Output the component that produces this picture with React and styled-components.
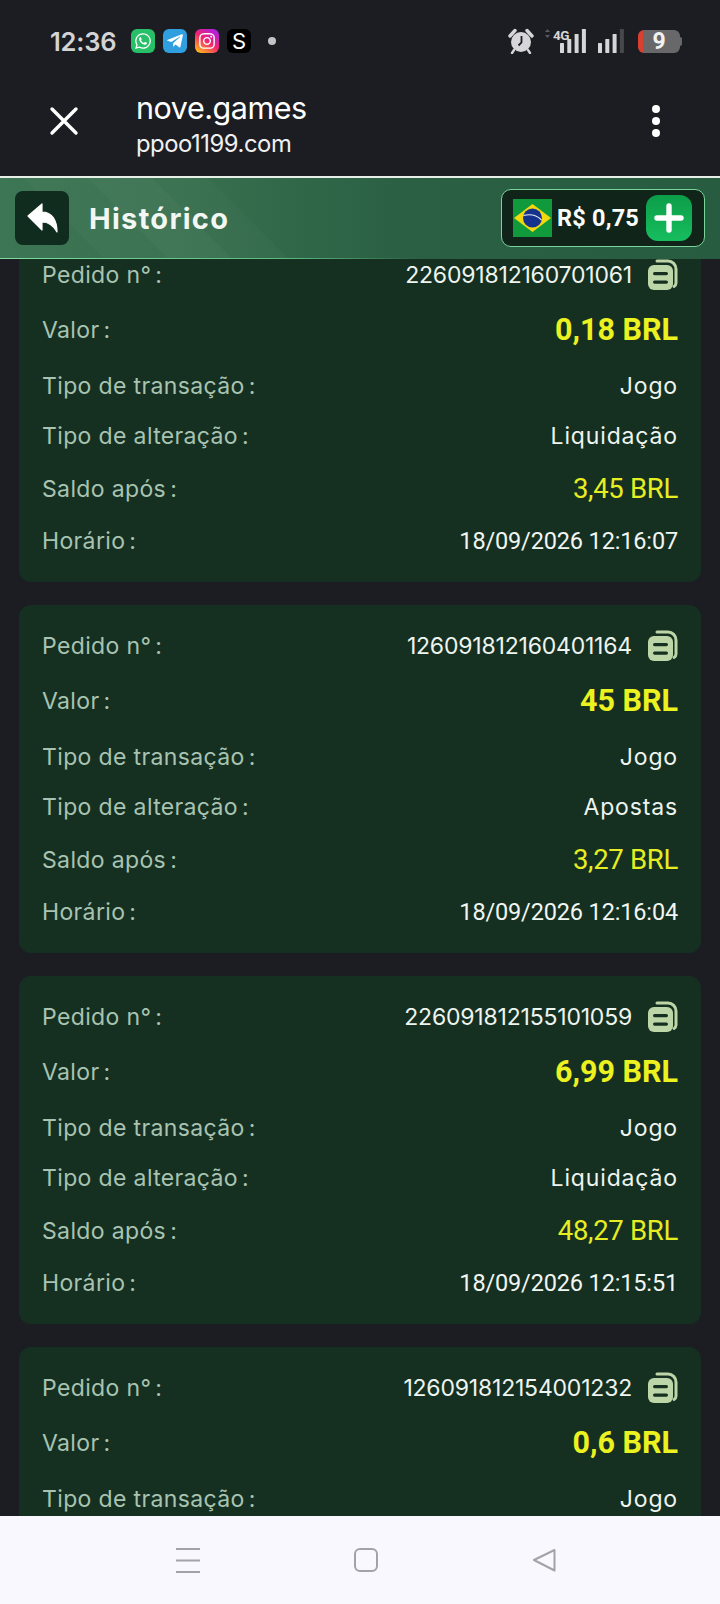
import React from "react";
import styled, { createGlobalStyle } from "styled-components";
import { FaWhatsapp, FaTelegramPlane, FaInstagram } from "react-icons/fa";

const Global = createGlobalStyle`
  html, body { margin: 0; padding: 0; background: #1c1d22; }
  * { box-sizing: border-box; }
`;

const Screen = styled.div`
  width: 720px; height: 1604px; display: flex; flex-direction: column;
  overflow: hidden; background: #1c1d22; font-family: "Inter", sans-serif;
`;
const StatusBar = styled.div`
  height: 82px; flex: none; display: flex; align-items: center; padding: 0 38px 0 50px; color: #d4d4d6;
`;
const Time = styled.span`
  font-size: 25.5px; font-weight: 600; width: 81px; letter-spacing: -0.2px;
`;
const AppIcon = styled.span`
  width: 24px; height: 24px; border-radius: 6px; margin-right: 8px; display: flex; align-items: center; justify-content: center;
  color: #fff; font-size: ${(p) => p.$fs || 18}px; background: ${(p) => p.$bg};
  font-family: "Inter", sans-serif;
`;
const Dot = styled.span`
  width: 8px; height: 8px; border-radius: 50%; background: #c4c4c6; margin-left: 9px;
`;
const StatusRight = styled.div`
  margin-left: auto; display: flex; align-items: center;
`;
const Spacer = styled.span`
  width: ${(p) => p.$w}px; flex: none;
`;
const Battery = styled.div`
  width: 42px; height: 23px; border-radius: 6px; background: #68686a; margin-left: 14px;
  display: flex; align-items: center; justify-content: center; color: #f2f2f2;
  font: 700 23px/23px "Roboto", sans-serif; border-left: 5px solid #d8402f;
  padding-right: 5px;
`;
const BatteryCap = styled.span`
  width: 2px; height: 9px; background: #68686a; border-radius: 0 2px 2px 0;
`;
const AppBar = styled.div`
  height: 94px; flex: none; display: flex; align-items: center; padding: 0 0 16px 48px; color: #fff;
`;
const Titles = styled.div`
  margin: 7px 0 0 56px; display: flex; flex-direction: column; flex: 1;
`;
const SiteTitle = styled.span`
  font-size: 30.5px; line-height: 36px; letter-spacing: -0.45px; font-weight: 400;
`;
const SiteUrl = styled.span`
  font-size: 23.8px; line-height: 30px; letter-spacing: -0.45px; color: #f0f0f0; margin-top: 3px;
`;
const MenuDots = styled.div`
  display: flex; flex-direction: column; gap: 4px; margin-right: 60px;
`;
const MenuDot = styled.span`
  width: 8px; height: 8px; border-radius: 50%; background: #fff;
`;
const Header = styled.div`
  position: relative; z-index: 1; height: 83px; flex: none; border-top: 2px solid #e8efe9;
  display: flex; align-items: center; padding: 0 15px 1px;
  background:
    linear-gradient(90deg, #7fdc9f 0%, #5cb880 40%, rgba(0,0,0,0) 58%) bottom / 100% 1px no-repeat,
    linear-gradient(45deg, rgba(255,255,255,0) 0 13%, rgba(255,255,255,.02) 13% 21%, rgba(255,255,255,.045) 21% 29%, rgba(255,255,255,.02) 29% 36%, rgba(255,255,255,0) 36% 47%),
    linear-gradient(90deg, #3d7655 0%, #38704f 25%, #2b6044 55%, #285c41 100%);
`;
const BackButton = styled.div`
  width: 54px; height: 54px; border-radius: 8px; background: #0f2c1e;
  display: flex; align-items: center; justify-content: center;
`;
const PageTitle = styled.h1`
  margin: 0 0 0 20px; font-size: 29px; font-weight: 700; color: #f2f7f3; letter-spacing: 1.3px;
`;
const Balance = styled.div`
  margin-left: auto; width: 204px; height: 58px; border: 1px solid #7ad49b; border-radius: 10px; background: #10241a;
  display: flex; align-items: center; padding: 0 12px 0 11px;
`;
const BalanceText = styled.span`
  font: 700 23.5px "Roboto", sans-serif; color: #fbfdfb; margin-left: 5px; white-space: nowrap; letter-spacing: .2px;
`;
const PlusButton = styled.div`
  margin-left: auto; width: 46px; height: 46px; border-radius: 12px;
  background: linear-gradient(180deg, #0c9d49, #17bd5e); display: flex; align-items: center; justify-content: center;
`;
const Viewport = styled.div`
  flex: 1; min-height: 0; overflow: hidden; background: #1c1d22;
`;
const List = styled.div`
  margin-top: -25px; padding: 0 19px; display: flex; flex-direction: column; gap: 23px;
`;
const Card = styled.section`
  background: #153021; border-radius: 12px; padding: 18px 23px 17px 23px; height: 348px; flex: none;
`;
const Row = styled.div`
  height: ${(p) => p.$h}px; display: flex; align-items: center; justify-content: space-between;
`;
const Label = styled.span`
  font-size: 23px; color: #a8c3b1; letter-spacing: .36px; white-space: nowrap; font-family: "Inter", sans-serif;
`;
const Colon = styled.span`
  margin-left: 4px;
`;
const IdWrap = styled.div`
  display: flex; align-items: center; gap: 16px;
`;
const IdText = styled.span`
  font-size: 23px; color: #eef4ef; letter-spacing: -.2px; font-family: "Inter", sans-serif;
`;
const TextValue = styled.span`
  font-size: 23px; color: #eef4ef; letter-spacing: .85px; font-family: "Inter", sans-serif;
`;
const Amount = styled.span`
  font: 700 30.5px "Roboto", sans-serif; color: #ecf120;
`;
const Saldo = styled.span`
  font: 400 27.5px "Roboto", sans-serif; color: #e6ee22; letter-spacing: -.3px;
`;
const DateText = styled.span`
  font: 400 23.5px "Roboto", sans-serif; color: #f2f6f2; letter-spacing: -.15px;
`;
const NavBar = styled.div`
  position: relative; z-index: 1; height: 88px; flex: none; background: #f8f8fe; display: flex; align-items: center;
  padding: 0 0 0 176px; gap: 154px;
`;

const Copy = () => (
  <svg width="30" height="31" viewBox="0 0 30 31">
    <path d="M9 2h11a8 8 0 0 1 8 8v14a4 4 0 0 1-2 3.5" fill="none" stroke="#bdd6a8" strokeWidth="3" strokeLinecap="round" />
    <rect x="0" y="6" width="25" height="25" rx="6" fill="#bdd6a8" />
    <rect x="5" y="13" width="15" height="3.2" rx="1.6" fill="#153021" />
    <rect x="5" y="21.5" width="15" height="3.2" rx="1.6" fill="#153021" />
  </svg>
);

const Flag = () => (
  <svg width="39" height="38" viewBox="0 0 39 38">
    <rect width="39" height="38" fill="#109a3c" />
    <polygon points="19.5,5 38,19 19.5,33 1,19" fill="#f4d80f" />
    <circle cx="19.5" cy="19" r="9.5" fill="#15338c" />
    <path d="M10.5 16.5c6-1.5 13-.5 18 4.5" fill="none" stroke="#e8eef4" strokeWidth="1.1" />
  </svg>
);

const Alarm = () => (
  <svg width="26" height="26" viewBox="0 0 26 26">
    <circle cx="13" cy="14" r="10" fill="#d6d6d8" />
    <path d="M2 8 7 2.5 M24 8 19 2.5" stroke="#d6d6d8" strokeWidth="3.4" strokeLinecap="round" />
    <path d="M6 22 4 25 M20 22 22 25" stroke="#d6d6d8" strokeWidth="2.4" strokeLinecap="round" />
    <path d="M13.5 8v6.5l-3 3" fill="none" stroke="#1c1d22" strokeWidth="1.8" />
  </svg>
);

const bars = [10, 14, 19, 24];

const Signal = ({ w, dimLast, network }) => (
  <svg width={w} height="26" viewBox={`0 0 ${w} 26`}>
    {bars.map((h, i) => (
      <rect
        key={h}
        x={w - 26 + i * 7.3}
        y={25 - h}
        width="4"
        height={h}
        rx="0.6"
        fill={dimLast && i === 3 ? "#47484c" : "#d6d6d8"}
      />
    ))}
    {network && (
      <>
        <path d="M0 4 2.5 1 5 4z M0 7 2.5 10 5 7z" fill="#58595d" />
        <text x="8" y="12" fontFamily="Roboto, sans-serif" fontWeight="700" fontSize="13.5" letterSpacing="-0.6" fill="#d6d6d8">{network}</text>
      </>
    )}
  </svg>
);

const rows = [
  { id: "226091812160701061", amt: "0,18 BRL", change: "Liquidação", saldo: "3,45 BRL", time: "18/09/2026 12:16:07" },
  { id: "126091812160401164", amt: "45 BRL", change: "Apostas", saldo: "3,27 BRL", time: "18/09/2026 12:16:04" },
  { id: "226091812155101059", amt: "6,99 BRL", change: "Liquidação", saldo: "48,27 BRL", time: "18/09/2026 12:15:51" },
  { id: "126091812154001232", amt: "0,6 BRL" },
];

const L = ({ children }) => <Label>{children}<Colon>:</Colon></Label>;

export default function App() {
  return (
    <Screen>
      <Global />
      <StatusBar>
        <Time>12:36</Time>
        <AppIcon $bg="#27c068"><FaWhatsapp /></AppIcon>
        <AppIcon $bg="#2f9fe0"><FaTelegramPlane /></AppIcon>
        <AppIcon $bg="linear-gradient(35deg,#ffb01f 10%,#f0246e 50%,#b01fe0 90%)"><FaInstagram /></AppIcon>
        <AppIcon $bg="#000" $fs={22}>S</AppIcon>
        <Dot />
        <StatusRight>
          <Alarm />
          <Spacer $w={11} />
          <Signal w={41} network="4G" />
          <Spacer $w={12} />
          <Signal w={26} dimLast />
          <Battery>9</Battery>
          <BatteryCap />
        </StatusRight>
      </StatusBar>
      <AppBar>
        <svg width="32" height="32" viewBox="0 0 32 32">
          <path d="M4 4 28 28 M28 4 4 28" stroke="#fff" strokeWidth="3.4" strokeLinecap="round" />
        </svg>
        <Titles>
          <SiteTitle>nove.games</SiteTitle>
          <SiteUrl>ppoo1199.com</SiteUrl>
        </Titles>
        <MenuDots><MenuDot /><MenuDot /><MenuDot /></MenuDots>
      </AppBar>
      <Header>
        <BackButton>
          <svg width="31" height="30" viewBox="0 0 31 30">
            <path d="M1 13 15 1v8c10 0 15 8 15 20-4-7-9-10-15-10v8z" fill="#fff" stroke="#fff" strokeWidth="1.2" strokeLinejoin="round" />
          </svg>
        </BackButton>
        <PageTitle>Histórico</PageTitle>
        <Balance>
          <Flag />
          <BalanceText>R$ 0,75</BalanceText>
          <PlusButton>
            <svg width="30" height="30" viewBox="0 0 30 30">
              <path d="M15 3v24 M3 15h24" stroke="#fff" strokeWidth="5.4" strokeLinecap="round" />
            </svg>
          </PlusButton>
        </Balance>
      </Header>
      <Viewport>
        <List>
          {rows.map((r) => (
            <Card key={r.id}>
              <Row $h={45}>
                <L>Pedido n°</L>
                <IdWrap><IdText>{r.id}</IdText><Copy /></IdWrap>
              </Row>
              <Row $h={65}><L>Valor</L><Amount>{r.amt}</Amount></Row>
              <Row $h={48}><L>Tipo de transação</L><TextValue>Jogo</TextValue></Row>
              {r.change && (
                <>
                  <Row $h={51}><L>Tipo de alteração</L><TextValue>{r.change}</TextValue></Row>
                  <Row $h={55}><L>Saldo após</L><Saldo>{r.saldo}</Saldo></Row>
                  <Row $h={49}><L>Horário</L><DateText>{r.time}</DateText></Row>
                </>
              )}
            </Card>
          ))}
        </List>
      </Viewport>
      <NavBar>
        <svg width="24" height="25" viewBox="0 0 24 25">
          <path d="M0 1h24 M0 12.5h24 M0 24h24" stroke="#a2a2aa" strokeWidth="1.8" />
        </svg>
        <svg width="24" height="24" viewBox="0 0 24 24">
          <rect x="1" y="1" width="22" height="22" rx="5" fill="none" stroke="#a2a2aa" strokeWidth="2" />
        </svg>
        <svg width="24" height="24" viewBox="0 0 24 24">
          <path d="M22.5 2 2 12 22.5 22.5z" fill="none" stroke="#a2a2aa" strokeWidth="2" strokeLinejoin="round" />
        </svg>
      </NavBar>
    </Screen>
  );
}
